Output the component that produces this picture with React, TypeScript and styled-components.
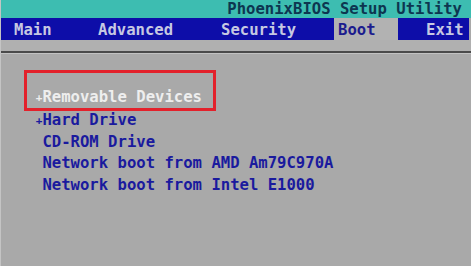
import React from 'react';
import styled, { createGlobalStyle } from 'styled-components';

const GlobalStyle = createGlobalStyle`
  html, body {
    margin: 0;
    padding: 0;
    background: #a9a9a9;
  }
`;

const Screen = styled.div`
  width: 471px;
  height: 266px;
  background: #a9a9a9;
  border-left: 1px solid #c4c4c4;
  box-sizing: border-box;
  overflow: hidden;
  display: flex;
  flex-direction: column;
  font-family: 'DejaVu Sans Mono', 'Liberation Mono', monospace;
  font-weight: bold;
  font-size: 15.6px;
`;

const TitleBar = styled.div`
  height: 18px;
  line-height: 18px;
  background: #3dbdb1;
  color: #0d3650;
  text-align: right;
  padding-right: 9px;
  white-space: pre;
`;

const MenuBar = styled.div`
  height: 22px;
  display: flex;
  background: #0d0da8;
  margin-right: 2px;
`;

const Tab = styled.div<{ $width: number; $pad: number; $active?: boolean }>`
  width: ${(p) => p.$width}px;
  padding-left: ${(p) => p.$pad}px;
  padding-top: 2px;
  box-sizing: border-box;
  line-height: 20px;
  background: ${(p) => (p.$active ? '#b2b2b2' : 'transparent')};
  color: ${(p) => (p.$active ? '#1c1c8e' : '#c6c8e2')};
  white-space: pre;
`;

const Spacer = styled.div`
  height: 11px;
  background: #b0b0b0;
`;

const Rule = styled.div`
  height: 2px;
  background: #4a4a4a;
  border-bottom: 1px solid #c2c2c2;
`;

const Content = styled.div`
  flex: 1;
  padding-top: 16px;
  padding-left: 23px;
`;

const Highlight = styled.div`
  width: 192px;
  height: 41px;
  box-sizing: border-box;
  border: 3px solid #e3212b;
  padding: 13px 0 0 6px;
  margin-bottom: -2px;
`;

const Row = styled.div<{ $selected?: boolean }>`
  height: 21.5px;
  line-height: 22px;
  padding-left: ${(p) => (p.$selected ? 0 : 9)}px;
  color: ${(p) => (p.$selected ? '#eeeeee' : '#1a1a9e')};
  white-space: pre;
`;

const Marker = styled.span`
  display: inline-block;
  width: 9.4px;
  text-align: right;
  font-size: 11px;
  vertical-align: 1px;
`;

const tabs = [
  { label: 'Main', width: 83, pad: 13 },
  { label: 'Advanced', width: 123, pad: 14 },
  { label: 'Security', width: 127, pad: 14 },
  { label: 'Boot', width: 64, pad: 4, active: true },
  { label: 'Exit', width: 71, pad: 28 },
];

const items = [
  { label: 'Hard Drive', expandable: true },
  { label: 'CD-ROM Drive' },
  { label: 'Network boot from AMD Am79C970A' },
  { label: 'Network boot from Intel E1000' },
];

const App: React.FC = () => {
  return (
    <Screen>
      <GlobalStyle />
      <TitleBar>PhoenixBIOS Setup Utility</TitleBar>
      <MenuBar>
        {tabs.map((t) => (
          <Tab key={t.label} $width={t.width} $pad={t.pad} $active={t.active}>
            {t.label}
          </Tab>
        ))}
      </MenuBar>
      <Spacer />
      <Rule />
      <Content>
        <Highlight>
          <Row $selected>
            <Marker>+</Marker>Removable Devices
          </Row>
        </Highlight>
        {items.map((item) => (
          <Row key={item.label}>
            <Marker>{item.expandable ? '+' : ''}</Marker>
            {item.label}
          </Row>
        ))}
      </Content>
    </Screen>
  );
};

export default App;
